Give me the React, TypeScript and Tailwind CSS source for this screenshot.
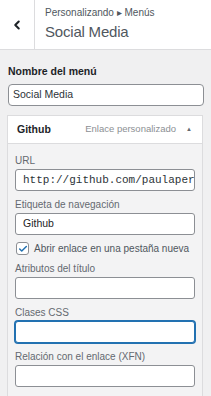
import { Check, ChevronLeft } from 'lucide-react';

const font = { fontFamily: '"Liberation Sans", Arial, sans-serif' };

function Field({ label, value, mono, focused }: { label: string; value?: string; mono?: boolean; focused?: boolean }) {
  return (
    <div className="flex flex-col">
      <label className="h-[14px] leading-[14px] text-[10px] text-[#646970] mb-[1px]">{label}</label>
      <div
        className={
          'h-[22px] rounded-[3px] bg-white flex items-center pl-[7px] overflow-hidden whitespace-nowrap ' +
          (focused ? 'border border-[#2271b1] shadow-[0_0_0_1px_#2271b1]' : 'border border-[#8c8f94]')
        }
      >
        <span
          className={mono ? 'text-[11px] text-[#2c3338] font-["Liberation_Mono",monospace]' : 'text-[10.5px] text-[#1d2327]'}
        >
          {value}
        </span>
      </div>
    </div>
  );
}

export default function App() {
  return (
    <div className="w-[211px] h-[396px] bg-[#f0f0f1] overflow-hidden" style={font}>
      <div className="flex h-[50px] bg-white border-b border-[#dcdcde]">
        <div className="w-[35px] flex items-center justify-center border-r border-[#dcdcde]">
          <ChevronLeft className="w-[14px] h-[14px] text-[#1d2327]" strokeWidth={3.5} />
        </div>
        <div className="flex flex-col pl-[10px] pt-[6px]">
          <div className="text-[10px] leading-[14px] text-[#50575e]">Personalizando ▸ Menús</div>
          <div className="text-[15px] leading-[20px] mt-[2px] text-[#50575e] tracking-[-0.2px]">Social Media</div>
        </div>
      </div>

      <div className="px-[8px] pt-[14px]">
        <div className="text-[10.5px] leading-[14px] font-bold text-[#1d2327] mb-[6px]">Nombre del menú</div>
        <div className="h-[22px] rounded-[4px] bg-white border border-[#8c8f94] flex items-center pl-[4px] -mr-[1px]">
          <span className="text-[10.5px] text-[#2c3338]">Social Media</span>
        </div>

        <div className="mt-[9px] -ml-[1px] border border-[#dcdcde] border-b-0">
          <div className="h-[28px] bg-white flex items-center pl-[9px] pr-[10px] border-b border-[#dcdcde]">
            <span className="text-[10.5px] font-bold text-[#1d2327]">Github</span>
            <span className="ml-auto text-[9.5px] text-[#8c8f94]">Enlace personalizado</span>
            <span className="ml-[10px] text-[6px] text-[#646970]">▲</span>
          </div>
          <div className="bg-[#f3f3f4] pl-[7px] pr-[7px] pt-[10px] pb-[20px] flex flex-col gap-[7px]">
            <Field label="URL" value="http://github.com/paulaperez" mono />
            <Field label="Etiqueta de navegación" value="Github" />
            <div className="h-[13px] flex items-center gap-[5px] pl-[1px]">
              <div className="w-[13px] h-[13px] rounded-[3px] border border-[#8c8f94] bg-white flex items-center justify-center">
                <Check className="w-[10px] h-[10px] text-[#2271b1]" strokeWidth={3.5} />
              </div>
              <span className="text-[10px] text-[#50575e] whitespace-nowrap">Abrir enlace en una pestaña nueva</span>
            </div>
            <Field label="Atributos del título" />
            <Field label="Clases CSS" focused />
            <Field label="Relación con el enlace (XFN)" />
          </div>
        </div>
      </div>
    </div>
  );
}
